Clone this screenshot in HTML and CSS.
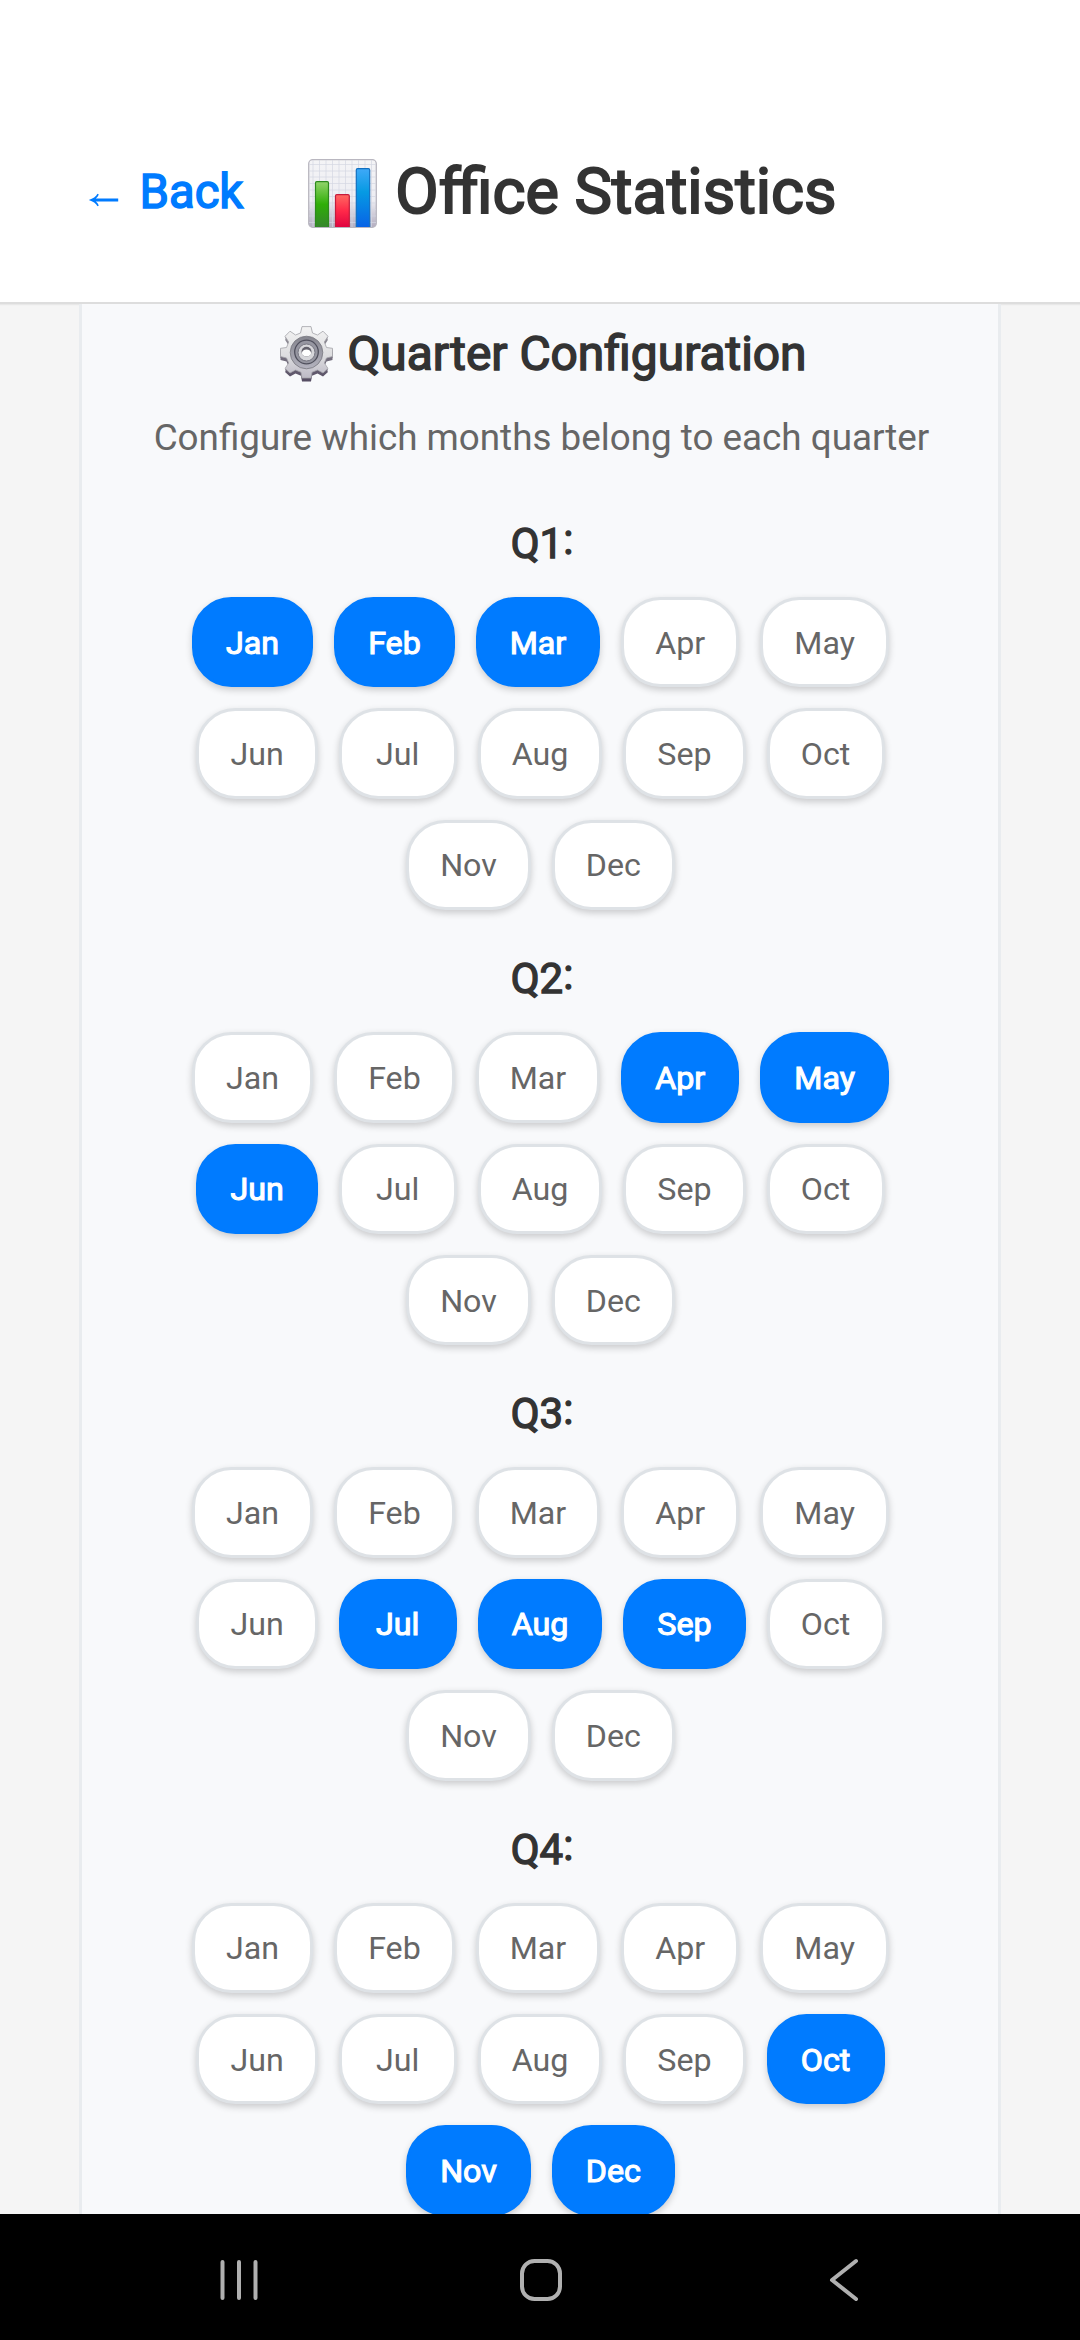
FILE: index.html
```
<!DOCTYPE html>
<html lang="en">
<head>
<meta charset="utf-8">
<title>Office Statistics</title>
<link rel="stylesheet" href="styles.css">
</head>
<body>
<div class="screen">
  <header class="header">
    <a class="back">
      <svg class="back-arrow" viewBox="0 0 31 14" aria-hidden="true"><path d="M9.5 0.8C8 3.5 5 5.7 0.8 7C5 8.300 8 10.500 9.500 13.200L10.800 12.500C10 10.500 8.900 9.300 7.800 8.500H30.200V5.500H7.800C8.900 4.700 10 3.500 10.800 1.500Z" fill="#007bff"/></svg>
      <span>Back</span>
    </a>
    <h1 class="title">
      <svg class="chart-icon" viewBox="0 0 69 69" aria-hidden="true">
        <defs>
          <linearGradient id="sheet" x2="0" y2="1"><stop offset="0" stop-color="#f4f4f6"/><stop offset=".6" stop-color="#eeeef3"/><stop offset="1" stop-color="#b3adc0"/></linearGradient>
          <linearGradient id="green" x2="0" y2="1"><stop offset="0" stop-color="#92d36c"/><stop offset=".5" stop-color="#2fae07"/><stop offset="1" stop-color="#35852c"/></linearGradient>
          <linearGradient id="red" x2="0" y2="1"><stop offset="0" stop-color="#ff6a62"/><stop offset=".5" stop-color="#ff2949"/><stop offset="1" stop-color="#e00440"/></linearGradient>
          <linearGradient id="blue" x2="0" y2="1"><stop offset="0" stop-color="#3fa9f8"/><stop offset=".4" stop-color="#069ae3"/><stop offset="1" stop-color="#0863e6"/></linearGradient>
        </defs>
        <rect x=".7" y=".7" width="67.600" height="67.600" rx="4" fill="url(#sheet)" stroke="#b9b7c0" stroke-width="1.300"/>
        <path d="M11.500 1V68M18 1V68M24.500 1V68M31 1V68M37.500 1V68M44 1V68M50.500 1V68M57 1V68M63.500 1V68M5 1V68M1 5.500H68M1 12H68M1 18H68M1 24.500H68M1 31H68M1 37.500H68M1 44H68M1 50.500H68M1 57H68M1 63.500H68" stroke="#d4d7e2" stroke-width=".7" fill="none"/>
        <path d="M7.500 68V24q0-1.300 1.300-1.300H19.200q1.300 0 1.300 1.300V68" fill="url(#green)" stroke="#2c8a1d" stroke-width="1.200"/>
        <path d="M27.500 68V37q0-1.300 1.300-1.300H40q1.300 0 1.300 1.300V68" fill="url(#red)" stroke="#c51b3c" stroke-width="1.200"/>
        <path d="M48.300 68V11q0-1.300 1.300-1.300H60.400q1.300 0 1.300 1.300V68" fill="url(#blue)" stroke="#116fc0" stroke-width="1.200"/>
      </svg>
      <span>Office Statistics</span>
    </h1>
  </header>

  <main class="content">
    <section class="panel">
      <h2 class="panel-title">
        <svg class="gear-icon" viewBox="0 0 53 56" aria-hidden="true">
          <defs>
            <linearGradient id="face" x2="0" y2="1"><stop offset="0" stop-color="#f3f3f3"/><stop offset=".55" stop-color="#dedee0"/><stop offset="1" stop-color="#bdbac6"/></linearGradient>
            <linearGradient id="side" x2="0" y2="1"><stop offset="0" stop-color="#9b9aa0"/><stop offset="1" stop-color="#554c62"/></linearGradient>
            <linearGradient id="dish" x2="0" y2="1"><stop offset="0" stop-color="#85858e"/><stop offset="1" stop-color="#b4b3bf"/></linearGradient>
            <path id="cog" d="M22 .6H31L32.500 7L37.500 9L43 5.200L48 10.300L44.300 16L46.500 21.500L52.500 22.300V30.500L46.500 32L44.300 37L48 42.500L43 47L37.500 44L32 46.300L31 52H22L21 46.300L15.500 44L10 47L5 42.500L8.700 37L6.500 32L.5 30.500V22.300L6.500 21.500L8.700 16L5 10.300L10 5.200L15.500 9L20.500 7Z"/>
          </defs>
          <use href="#cog" y="3.500" fill="url(#side)"/>
          <use href="#cog" y="1.500" fill="url(#side)"/>
          <use href="#cog" fill="url(#face)" stroke="#a3a3a8" stroke-width=".8"/>
          <circle cx="26.500" cy="26.500" r="16.300" fill="url(#dish)" stroke="#77777f" stroke-width=".8"/>
          <circle cx="26.500" cy="26" r="11.800" fill="#9696a1" stroke="#50505d" stroke-width="1.300"/>
          <circle cx="26.500" cy="26.500" r="8.500" fill="#d6d6da" stroke="#777782" stroke-width="1"/>
          <circle cx="26.500" cy="25.800" r="5" fill="#62606b"/>
          <ellipse cx="26.500" cy="27" rx="4.600" ry="3.600" fill="#fff"/>
        </svg>
        <span>Quarter Configuration</span>
      </h2>
      <p class="panel-text">Configure which months belong to each quarter</p>

      <div class="quarter">
        <h3 class="quarter-name">Q1<span class="colon">:</span></h3>
        <div class="months">
          <button class="month selected">Jan</button><button class="month selected">Feb</button><button class="month selected">Mar</button><button class="month">Apr</button><button class="month">May</button><button class="month">Jun</button><button class="month">Jul</button><button class="month">Aug</button><button class="month">Sep</button><button class="month">Oct</button><button class="month">Nov</button><button class="month">Dec</button>
        </div>
      </div>
      <div class="quarter">
        <h3 class="quarter-name">Q2<span class="colon">:</span></h3>
        <div class="months">
          <button class="month">Jan</button><button class="month">Feb</button><button class="month">Mar</button><button class="month selected">Apr</button><button class="month selected">May</button><button class="month selected">Jun</button><button class="month">Jul</button><button class="month">Aug</button><button class="month">Sep</button><button class="month">Oct</button><button class="month">Nov</button><button class="month">Dec</button>
        </div>
      </div>
      <div class="quarter">
        <h3 class="quarter-name">Q3<span class="colon">:</span></h3>
        <div class="months">
          <button class="month">Jan</button><button class="month">Feb</button><button class="month">Mar</button><button class="month">Apr</button><button class="month">May</button><button class="month">Jun</button><button class="month selected">Jul</button><button class="month selected">Aug</button><button class="month selected">Sep</button><button class="month">Oct</button><button class="month">Nov</button><button class="month">Dec</button>
        </div>
      </div>
      <div class="quarter">
        <h3 class="quarter-name">Q4<span class="colon">:</span></h3>
        <div class="months">
          <button class="month">Jan</button><button class="month">Feb</button><button class="month">Mar</button><button class="month">Apr</button><button class="month">May</button><button class="month">Jun</button><button class="month">Jul</button><button class="month">Aug</button><button class="month">Sep</button><button class="month selected">Oct</button><button class="month selected">Nov</button><button class="month selected">Dec</button>
        </div>
      </div>
    </section>
  </main>

  <nav class="navbar">
    <svg class="nav-icon" viewBox="0 0 44 44" aria-label="Recents"><path d="M5.500 4V40M22 4V40M38.500 4V40"/></svg>
    <svg class="nav-icon" viewBox="0 0 44 44" aria-label="Home"><rect x="3" y="3" width="38" height="38" rx="12.500"/></svg>
    <svg class="nav-icon" viewBox="0 0 44 44" aria-label="Back"><path d="M35 3L11 22L35 41"/></svg>
  </nav>
</div>
</body>
</html>
```
FILE: styles.css
```
* { box-sizing: border-box; }

body {
  margin: 0;
  font-family: Roboto, "Noto Sans", sans-serif;
  font-weight: 400;
  color: #333;
}

h1, h2, h3, p { margin: 0; font-weight: 400; }

.screen {
  display: flex;
  flex-direction: column;
  width: 1080px;
  height: 2340px;
  overflow: hidden;
  background: #f5f5f5;
}

.header {
  display: flex;
  align-items: center;
  flex: none;
  height: 304px;
  padding: 81px 0 0 88px;
  gap: 64.5px;
  background: #fff;
  border-bottom: 2px solid #ddd;
  box-shadow: 0 1px 1px #e8e8e8;
}

.back {
  display: flex;
  align-items: center;
  gap: 20.5px;
  color: #007bff;
  font-size: 47.25px;
  -webkit-text-stroke: 1.5px #007bff;
}

.back-arrow { width: 31px; height: 14px; margin-top: 17px; }

.title {
  display: flex;
  align-items: center;
  gap: 18.5px;
  font-size: 63px;
  -webkit-text-stroke: 2px #333;
}

.chart-icon { width: 69px; height: 69px; margin-top: 4px; }

.content {
  flex: 1;
  min-height: 0;
  overflow: hidden;
  padding: 0 79px;
}

.panel {
  padding: 22px 41px 0 42px;
  background: #f8f9fb;
  border: solid #e9ecef;
  border-width: 0 3px;
}

.panel-title {
  display: flex;
  align-items: center;
  justify-content: center;
  gap: 14px;
  height: 56px;
  padding-left: 6px;
  font-size: 47.9px;
  -webkit-text-stroke: 1.5px #333;
}

.gear-icon { width: 53px; height: 56px; }

.panel-text {
  margin: 31px 0 56px 2px;
  font-size: 36.8px;
  line-height: 50px;
  text-align: center;
  white-space: nowrap;
  color: #666;
}

.quarter { height: 435.2px; }

.quarter-name {
  height: 78px;
  padding-left: 3px;
  font-size: 42px;
  line-height: 50px;
  text-align: center;
  -webkit-text-stroke: 1.3px #333;
}

.colon {
  line-height: 0;
  vertical-align: 4px;
}

.months {
  display: flex;
  flex-wrap: wrap;
  justify-content: center;
  gap: 21px;
}

.month {
  min-width: 118px;
  height: 90.4px;
  padding: 1px 31px 0;
  border: 3px solid #dee2e6;
  border-radius: 39.4px;
  background: #fff;
  box-shadow: 0 3px 7px rgba(0, 0, 0, .19);
  font-family: inherit;
  font-size: 32.2px;
  color: #666;
}

.selected {
  border-color: #007bff;
  background: #007bff;
  color: #fff;
  -webkit-text-stroke: 1.1px #fff;
}

.navbar {
  display: flex;
  flex: none;
  align-items: center;
  height: 126px;
  padding: 6px 0 0 217px;
  gap: 258px;
  background: #000;
}

.nav-icon {
  width: 44px;
  height: 44px;
  fill: none;
  stroke: #b0b0b0;
  stroke-width: 4;
  stroke-linecap: round;
  stroke-linejoin: round;
}
```
